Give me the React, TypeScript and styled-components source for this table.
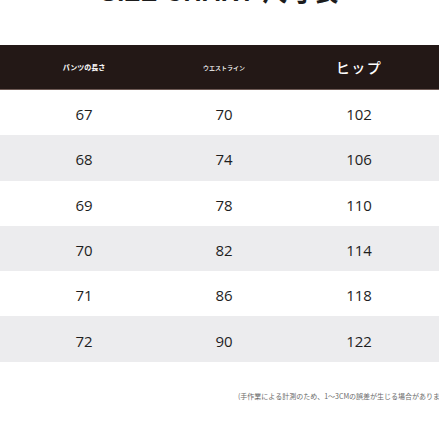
import React from 'react';
import styled, { createGlobalStyle } from 'styled-components';

const GlobalStyle = createGlobalStyle`
  html, body {
    margin: 0;
    padding: 0;
    background: #ffffff;
    overflow: hidden;
  }
  body {
    width: 439px;
    height: 439px;
    font-family: "Open Sans", "Noto Sans CJK JP", sans-serif;
  }
`;

const Page = styled.div`
  width: 439px;
  height: 439px;
  display: flex;
  flex-direction: column;
  overflow: hidden;
`;

const Title = styled.h1`
  margin: -21px 0 0 0;
  height: 26px;
  line-height: 26px;
  font-family: "Liberation Sans", "Noto Sans CJK JP", sans-serif;
  font-size: 25px;
  font-weight: 700;
  color: #1c1c1c;
  text-align: center;
  letter-spacing: 0.5px;
  white-space: nowrap;
`;

const Table = styled.div`
  margin-top: 40px;
  display: flex;
  flex-direction: column;
`;

const Row = styled.div<{ $shade?: boolean; $head?: boolean }>`
  display: grid;
  grid-template-columns: 140px 140px 130px;
  padding-left: 14px;
  align-items: center;
  height: ${(p) => (p.$head ? '44px' : '45.3px')};
  background: ${(p) => (p.$head ? '#231816' : p.$shade ? '#ececee' : '#ffffff')};
  border-bottom: ${(p) => (p.$head ? '1px solid #6e5a55' : 'none')};
`;

const HeadCell = styled.div<{ $size: number; $weight: number; $spacing?: number }>`
  text-align: center;
  color: #ffffff;
  font-family: "Noto Sans CJK JP", sans-serif;
  font-size: ${(p) => p.$size}px;
  font-weight: ${(p) => p.$weight};
  letter-spacing: ${(p) => p.$spacing ?? 0}px;
  white-space: nowrap;
`;

const Cell = styled.div`
  text-align: center;
  font-family: "Open Sans", sans-serif;
  font-size: 15px;
  color: #1e1e1e;
  padding-top: 3px;
`;

const Note = styled.p`
  margin: 29px 0 0 0;
  padding-left: 238px;
  font-family: "Noto Sans CJK JP", sans-serif;
  font-size: 7px;
  color: #6a6a6a;
  white-space: nowrap;
`;

const rows = [
  [67, 70, 102],
  [68, 74, 106],
  [69, 78, 110],
  [70, 82, 114],
  [71, 86, 118],
  [72, 90, 122],
];

function App() {
  return (
    <Page>
      <GlobalStyle />
      <Title>SIZE CHART 尺寸表</Title>
      <Table>
        <Row $head>
          <HeadCell $size={7} $weight={700}>パンツの長さ</HeadCell>
          <HeadCell $size={6} $weight={500}>ウエストライン</HeadCell>
          <HeadCell $size={14} $weight={500} $spacing={1.5}>ヒップ</HeadCell>
        </Row>
        {rows.map((r, i) => (
          <Row key={i} $shade={i % 2 === 1}>
            {r.map((v, j) => (
              <Cell key={j}>{v}</Cell>
            ))}
          </Row>
        ))}
      </Table>
      <Note>(手作業による計測のため、1～3CMの誤差が生じる場合があります)</Note>
    </Page>
  );
}

export default App;
